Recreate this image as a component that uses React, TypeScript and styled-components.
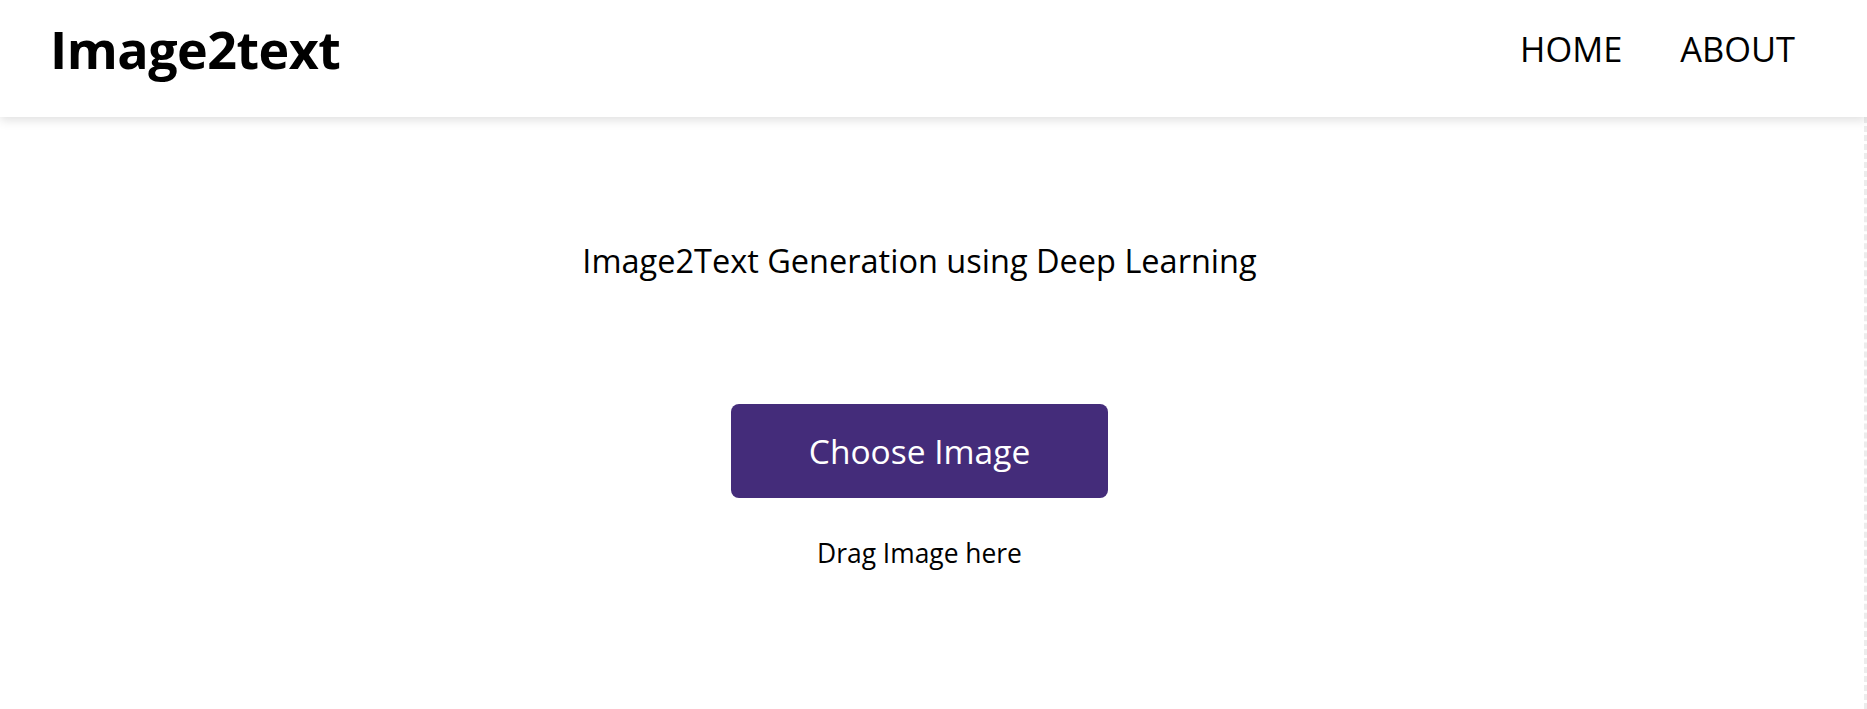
import React from "react";
import styled, { createGlobalStyle } from "styled-components";

const GlobalStyle = createGlobalStyle`
  html, body {
    margin: 0;
    padding: 0;
    background: #fff;
    font-family: "Open Sans", "Noto Sans", sans-serif;
    color: #000;
  }
`;

const Page = styled.div`
  min-height: 709px;
  display: flex;
  flex-direction: column;
`;

const Header = styled.header`
  height: 117px;
  display: flex;
  align-items: center;
  justify-content: space-between;
  padding: 0 72px 0 50px;
  background: #fff;
  box-shadow: 0 3px 10px rgba(0, 0, 0, 0.13);
  position: relative;
  z-index: 1;
`;

const Logo = styled.h1`
  margin: -20px 0 0;
  font-size: 52px;
  font-weight: 700;
  letter-spacing: -0.5px;
`;

const Nav = styled.nav`
  display: flex;
  gap: 58px;
  margin-top: -20px;
`;

const NavLink = styled.a`
  font-size: 34.4px;
  color: #000;
  text-decoration: none;
  cursor: pointer;
`;

const Main = styled.main`
  flex: 1;
  display: flex;
  flex-direction: column;
  align-items: center;
  padding: 121px 25px 0 0;
  border-right: 3px dashed #ececec;
`;

const Title = styled.h2`
  margin: 0;
  font-size: 32.5px;
  font-weight: 400;
`;

const ChooseButton = styled.button`
  margin-top: 121px;
  width: 377px;
  height: 94px;
  border: none;
  border-radius: 8px;
  background: #442c7a;
  color: #fff;
  font-family: inherit;
  font-size: 33.5px;
  cursor: pointer;
`;

const DropHint = styled.p`
  margin: 37px 0 0;
  font-size: 26.4px;
`;

export default function App() {
  return (
    <Page>
      <GlobalStyle />
      <Header>
        <Logo>Image2text</Logo>
        <Nav>
          <NavLink>HOME</NavLink>
          <NavLink>ABOUT</NavLink>
        </Nav>
      </Header>
      <Main>
        <Title>Image2Text Generation using Deep Learning</Title>
        <ChooseButton>Choose Image</ChooseButton>
        <DropHint>Drag Image here</DropHint>
      </Main>
    </Page>
  );
}
